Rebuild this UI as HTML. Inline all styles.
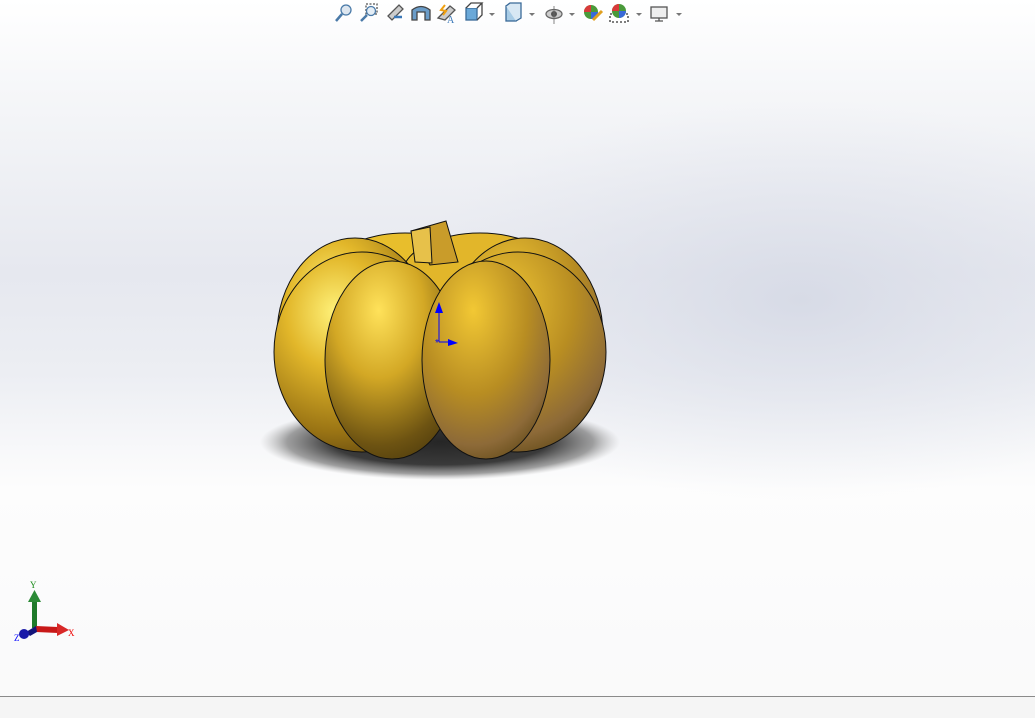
<!DOCTYPE html>
<html><head><meta charset="utf-8"><style>
html,body{margin:0;padding:0;width:1035px;height:718px;overflow:hidden;font-family:"Liberation Sans",sans-serif}
</style></head><body>
<svg width="1035" height="718" viewBox="0 0 1035 718" xmlns="http://www.w3.org/2000/svg">
<defs>
<linearGradient id="bgl" x1="0" y1="0" x2="0" y2="718" gradientUnits="userSpaceOnUse">
<stop offset="0" stop-color="#ffffff"/><stop offset="0.12" stop-color="#f6f7f9"/><stop offset="0.38" stop-color="#e6e8ef"/><stop offset="0.52" stop-color="#eceef3"/><stop offset="0.68" stop-color="#fdfdfd"/><stop offset="1" stop-color="#f9f9fa"/></linearGradient>
<radialGradient id="bg" cx="800" cy="300" r="400" gradientUnits="userSpaceOnUse" gradientTransform="translate(800 300) scale(1 0.5) translate(-800 -300)">
<stop offset="0" stop-color="#d5d9e5" stop-opacity="0.9"/><stop offset="1" stop-color="#e0e3ec" stop-opacity="0"/></radialGradient>
<radialGradient id="sh" cx="0.5" cy="0.5" r="0.5"><stop offset="0" stop-color="#262626"/><stop offset="0.6" stop-color="#3a3a3a"/><stop offset="0.85" stop-color="#777" stop-opacity="0.7"/><stop offset="1" stop-color="#aaa" stop-opacity="0"/></radialGradient>
<radialGradient id="lobeL" cx="0.35" cy="0.3" r="0.8"><stop offset="0" stop-color="#fff27a"/><stop offset="0.35" stop-color="#e2b72a"/><stop offset="0.75" stop-color="#9a7414"/><stop offset="1" stop-color="#5a4210"/></radialGradient>
<radialGradient id="lobeC" cx="0.4" cy="0.25" r="0.85"><stop offset="0" stop-color="#ffe25a"/><stop offset="0.4" stop-color="#d3a825"/><stop offset="0.8" stop-color="#6d5312"/><stop offset="1" stop-color="#4a380c"/></radialGradient>
<radialGradient id="lobeR" cx="0.4" cy="0.25" r="0.85"><stop offset="0" stop-color="#f2c834"/><stop offset="0.5" stop-color="#b88d22"/><stop offset="0.8" stop-color="#8d6a38"/><stop offset="1" stop-color="#5a4412"/></radialGradient>
</defs>
<rect width="1035" height="718" fill="url(#bgl)"/>
<rect width="1035" height="718" fill="url(#bg)"/>
<rect x="0" y="696" width="1035" height="22" fill="#f5f5f5"/>
<line x1="0" y1="696.5" x2="1035" y2="696.5" stroke="#8a8a8a"/>
<!-- shadow -->
<ellipse cx="440" cy="442" rx="180" ry="38" fill="url(#sh)"/>
<!-- back lobes -->
<ellipse cx="405" cy="275" rx="78" ry="42" fill="#e8be2c" stroke="#111" stroke-width="1"/>
<ellipse cx="480" cy="275" rx="78" ry="42" fill="#e2b62a" stroke="#111" stroke-width="1"/>
<!-- stem -->
<path d="M411 231 L446 221 L458 262 L430 265 Z" fill="#c99c2a" stroke="#111"/>
<path d="M411 231 L430 227 L432 263 L415 262 Z" fill="#e7c14a" stroke="#111"/>
<!-- outer lobes -->
<ellipse cx="355" cy="335" rx="78" ry="97" fill="url(#lobeL)" stroke="#111"/>
<ellipse cx="525" cy="335" rx="78" ry="97" fill="url(#lobeR)" stroke="#111"/>
<ellipse cx="362" cy="352" rx="88" ry="100" fill="url(#lobeL)" stroke="#111"/>
<ellipse cx="518" cy="352" rx="88" ry="100" fill="url(#lobeR)" stroke="#111"/>
<!-- center lobes -->
<ellipse cx="392" cy="360" rx="67" ry="99" fill="url(#lobeC)" stroke="#111"/>
<ellipse cx="486" cy="360" rx="64" ry="99" fill="url(#lobeR)" stroke="#111"/>
<ellipse cx="392" cy="360" rx="67" ry="99" fill="url(#lobeC)" stroke="#111" clip-path="inset(0 0 0 0)" opacity="0"/>
<!-- origin -->
<line x1="439" y1="342" x2="439" y2="310" stroke="#0000ff"/>
<path d="M435 313 L439 302 L443 313 Z" fill="#0000ff"/>
<line x1="439" y1="342" x2="450" y2="342" stroke="#0000ff"/>
<path d="M448 339 L458 343 L448 346 Z" fill="#0000ff"/>
<text x="435" y="346" font-size="10" fill="#0000ff">*</text>
<!-- triad -->
<rect x="32" y="599" width="5" height="29" fill="#1f7a2a"/>
<path d="M28 602 L34.5 590 L41 602 Z" fill="#2b8a36"/>
<text x="30" y="588" font-size="9" fill="#1a8a1a" font-family="Liberation Serif">Y</text>
<path d="M36 626 L58 627 L58 633 L36 632 Z" fill="#c81818"/>
<path d="M57 623 L69 630 L57 636 Z" fill="#d82828"/>
<text x="68" y="636" font-size="9" fill="#e00" font-family="Liberation Serif">X</text>
<path d="M36 626 L26 632 L30 636 L37 632 Z" fill="#14147a"/>
<circle cx="24" cy="634" r="5" fill="#1a1aa8"/>
<text x="14" y="641" font-size="9" fill="#00f" font-family="Liberation Serif">Z</text>
<!-- toolbar icons -->
<g stroke-width="1.3">
<circle cx="346" cy="10" r="5" fill="#dde6ef" stroke="#4a7aa8"/><line x1="342" y1="14" x2="336" y2="21" stroke="#4a7aa8" stroke-width="2.5"/>
<rect x="366" y="4" width="11" height="10" fill="none" stroke="#555" stroke-dasharray="2 1.5"/><circle cx="371" cy="11" r="4.5" fill="#e5eef6" stroke="#4a7aa8"/><line x1="367" y1="15" x2="361" y2="21" stroke="#4a7aa8" stroke-width="2.5"/>
<path d="M388 16 L399 5 L403 9 L392 20 Z" fill="#ccc" stroke="#555"/><path d="M394 17 L402 17" stroke="#3a78b8" stroke-width="2.5"/>
<path d="M412 20 L412 10 Q421 3 430 10 L430 20 L425 20 L425 12 L417 12 L417 20 Z" fill="#6a9cc8" stroke="#444"/>
<path d="M438 18 L450 6 L455 10 L445 20 Z" fill="#ccc" stroke="#555"/><path d="M445 5 L441 10 L446 11 L443 15" stroke="#f0a010" stroke-width="2" fill="none"/><text x="447" y="23" font-size="10" fill="#3a78b8" font-family="Liberation Serif">A</text>
<rect x="466" y="8" width="11" height="12" fill="#6aa8d8" stroke="#3a6a98"/><path d="M466 8 L471 3 L482 3 L477 8 M477 20 L482 15 L482 3" fill="#fff" stroke="#444"/>
<rect x="506" y="6" width="10" height="15" fill="#a8cce6" stroke="#3a6a98"/><path d="M506 6 L510 3 L521 3 L521 18 L516 21" fill="#d8e8f4" stroke="#3a6a98"/>
<ellipse cx="554" cy="14" rx="8" ry="4.5" fill="#ccc" stroke="#666"/><circle cx="554" cy="14" r="3" fill="#555"/><line x1="554" y1="6" x2="554" y2="24" stroke="#666" stroke-width="0.8"/>
<circle cx="591" cy="12" r="7" fill="#4a9a3a"/><path d="M584 12 A7 7 0 0 1 591 5 L591 12 Z" fill="#d83a3a"/><path d="M591 12 L598 12 A7 7 0 0 1 591 19 Z" fill="#3a6ad8"/><path d="M593 20 L602 11" stroke="#e0a020" stroke-width="3"/>
<rect x="610" y="14" width="18" height="8" fill="#fff" stroke="#333" stroke-dasharray="2 2"/><circle cx="619" cy="11" r="7" fill="#4a9a3a"/><path d="M612 11 A7 7 0 0 1 619 4 L619 11 Z" fill="#d83a3a"/><path d="M619 11 L626 11 A7 7 0 0 1 619 18 Z" fill="#3a6ad8"/>
<rect x="651" y="7" width="16" height="11" fill="#eee" stroke="#555"/><path d="M659 18 L659 21 M655 21 L663 21" stroke="#555"/>
</g>
<g fill="#777">
<path d="M489 13 L495 13 L492 16Z"/><path d="M529 13 L535 13 L532 16Z"/><path d="M569 13 L575 13 L572 16Z"/><path d="M636 13 L642 13 L639 16Z"/><path d="M676 13 L682 13 L679 16Z"/>
</g>
</svg>
</body></html>
